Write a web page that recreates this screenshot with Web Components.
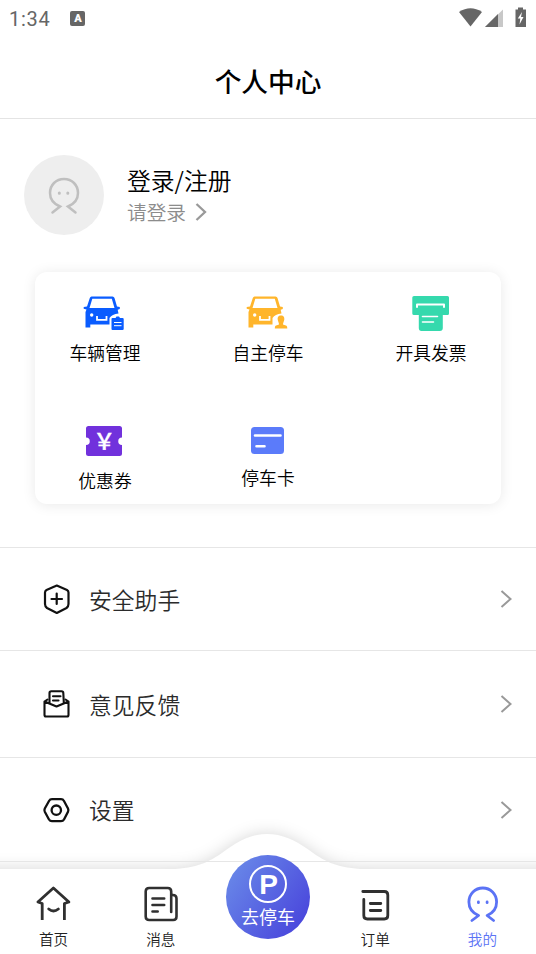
<!DOCTYPE html>
<html lang="zh-CN">
<head>
<meta charset="utf-8">
<title>个人中心</title>
<style>
html,body{margin:0;height:100%;background:#fff}
body{font-family:"Noto Sans CJK SC",sans-serif;font-weight:350;color:#111;overflow:hidden}
</style>
</head>
<body>
<profile-page></profile-page>
<script>
const define = (name, html) => {
  const t = document.createElement('template');
  t.innerHTML = html;
  customElements.define(name, class extends HTMLElement {
    constructor() {
      super();
      this.attachShadow({ mode: 'open' }).append(t.content.cloneNode(true));
    }
  });
};

define('status-bar', `
<style>
:host{display:flex;align-items:center;height:37px;box-sizing:border-box;padding:0 9px;color:#666;font:400 20px/37px Roboto,sans-serif}
.time{letter-spacing:.7px;padding-top:1px}
.kb{width:15px;height:15px;margin-left:20px;border-radius:2px;background:#666;color:#fff;font:900 11px/15px Roboto,sans-serif;text-align:center}
.right{margin-left:auto;display:block;margin-right:1px}
</style>
<span class="time">1:34</span><span class="kb">A</span>
<svg class="right" width="68" height="24" viewBox="458 6.500 68 24">
<path d="M459 11.500Q470.500 4 482 11.500L470.500 26Z" fill="#666"/>
<path d="M485 26.500 503 9V26.500Z" fill="#c8c8c8"/><path d="M485 26.500 498 13.500V26.500Z" fill="#666"/>
<path d="M515.500 9H518V7H523V9H526V26.500H515.500Z" fill="#666"/>
<path d="M522 11.500 517.800 18H520.300L519.500 24 523.500 16.500H521Z" fill="#fff"/>
</svg>`);

define('page-header', `
<style>:host{display:flex;justify-content:center;align-items:center;height:82px;box-sizing:border-box;border-bottom:1px solid #e4e4e4;font-size:26.700px;font-weight:500;color:#000;padding-top:6px}
</style><span><slot></slot></span>`);

define('user-profile', `
<style>
:host{display:flex;align-items:center;gap:23px;height:153px;box-sizing:border-box;padding:0 24px 1px}
.avatar{width:80px;height:80px;border-radius:50%;background:#eee;display:grid;place-items:center}
.name{font-size:23.800px;line-height:32px;color:#000;padding-top:2px}
.sub{display:flex;align-items:center;gap:9px;font-size:19.700px;line-height:32px;color:#8c8c8c}
</style>
<div class="avatar"><svg width="80" height="80" viewBox="24 155 80 80" fill="none" stroke="#bfbfbf" stroke-width="2.500" stroke-linecap="round">
<path d="M52.500 212.500 60 206.500C54 204 50 199 50 193C50 185 56 179 64 179S78 185 78 193C78 199 74 204 68 206.500L75.500 212.500"/>
<path d="M59.300 193v.300M67.800 193v.300" stroke-width="3"/></svg></div>
<div><div class="name"><slot></slot></div><div class="sub"><slot name="hint"></slot>
<svg width="13" height="20" viewBox="0 0 13 20" fill="none" stroke="#999" stroke-width="2.300"><path d="M1.500 2 10 10 1.500 18"/></svg></div></div>`);

define('service-item', `
<style>
:host{display:flex;flex-direction:column;align-items:center;font-size:17.800px;line-height:24px;color:#000}
::slotted(svg){display:block}
</style><slot name="icon"></slot><span><slot></slot></span>`);

define('service-card', `
<style>
:host{display:grid;grid-template-columns:repeat(3,140px);grid-template-rows:128px 104px;column-gap:23px;width:466px;height:232px;margin:0 auto;border-radius:12px;background:#fff;box-shadow:0 1px 14px rgba(0,0,0,.09)}
</style><slot></slot>`);

define('menu-row', `
<style>
:host{display:flex;align-items:center;height:var(--h,103px);box-sizing:border-box;border-bottom:1px solid #e6e6e6;padding:0 23px 0 40px;font-size:22.800px;color:#2b2b2b}
.label{margin-left:16px;flex:1;line-height:32px;padding-top:1px}
::slotted(svg){display:block}
</style>
<slot name="icon"></slot><span class="label"><slot></slot></span>
<svg width="13" height="20" viewBox="0 0 13 20" fill="none" stroke="#999" stroke-width="2"><path d="M1.500 2 10.500 10 1.500 18"/></svg>`);

define('tab-item', `
<style>
:host{display:flex;flex-direction:column;align-items:center;flex:1;padding-top:16px;font-size:14.600px;line-height:20px;color:#222}
:host([active]){color:#5b73f5}
::slotted(svg){display:block;margin-bottom:4px}
</style><slot name="icon"></slot><span><slot></slot></span>`);

define('park-button', `
<style>
:host{display:flex;flex-direction:column;align-items:center;width:84px;height:84px;box-sizing:border-box;padding-top:10px;border-radius:50%;background:linear-gradient(125deg,#6a8be9 5%,#4a47dc 88%);color:#fff;font-size:18px;font-weight:400;line-height:26px}
.p{width:38px;height:38px;box-sizing:border-box;border:2px solid #fff;border-radius:50%;font:bold 28px/35px "Liberation Sans",sans-serif;text-align:center;padding-left:1px}
.t{white-space:nowrap}
</style><div class="p">P</div><span class="t"><slot></slot></span>`);

define('tab-bar', `
<style>
:host{position:absolute;left:0;right:0;bottom:0;height:85px;display:flex}
.bg{position:absolute;left:0;bottom:0;overflow:hidden;z-index:-1}
::slotted(park-button){position:absolute;left:226px;top:-14px}
.gap{flex:1}
</style>
<svg class="bg" width="536" height="154" viewBox="0 800 536 154">
<path d="M-30 869H176C200 867 211 861 226 850C240 840 252 834 267 834S295 840 309 850C324 861 335 867 360 869H566V1000H-30Z" fill="#fff" style="filter:drop-shadow(0 0 8px rgba(0,0,0,.16))"/></svg>
<slot name="left"></slot><span class="gap"></span><slot name="right"></slot><slot></slot>`);

const car = `
<path fill-rule="evenodd" d="M91.500 296.500H112.500Q114 296.500 114.500 298L117 306.500 119.800 307V309L117.700 309.700 118.500 313.500Q112 314 109.500 318V324.500H90.300V327.500H85.500V312L86.500 309.500 83.700 308.700V307L87 306.500 89.800 298Q90.300 296.500 91.500 296.500ZM92.300 298.800 89.500 308H114.500L111.800 298.800Z"/>
<circle cx="91.700" cy="315" r="1.700" fill="#fff"/><path d="M97 316V319.800H106.500V316" fill="none" stroke="#fff" stroke-width="1.800"/>`;

define('profile-page', `
<style>
:host{display:flex;flex-direction:column;position:relative;width:536px;height:954px;overflow:hidden;background:#fff;isolation:isolate}
.menu{margin-top:43px;border-top:1px solid #e6e6e6}
</style>
<status-bar></status-bar>
<page-header>个人中心</page-header>
<user-profile>登录/注册<span slot="hint">请登录</span></user-profile>
<service-card>
<service-item><svg slot="icon" width="140" height="68" viewBox="35 272 140 68" fill="#0a5cff">${car}
<path d="M112.500 318H115.500L116.500 316.500H119L120 318H122.500Q123.700 318 123.700 319V329Q123.700 330 122.500 330H112.500Q111.500 330 111.500 329V319Q111.500 318 112.500 318Z"/><path d="M114 322.500H121.500M114 325.700H121.500" stroke="#fff" stroke-width="1"/></svg>车辆管理</service-item>
<service-item><svg slot="icon" width="140" height="68" viewBox="35 272 140 68" fill="#ffb52b">${car}
<path d="M118 315.500C120.800 315.500 121.500 317.500 121.300 319.500C121.100 321.500 120 322.500 120 324.500L123.500 325.800Q124.300 326.200 124.300 328.500H111.800Q111.800 326.200 112.500 325.800L116 324.500C116 322.500 114.900 321.500 114.700 319.500C114.500 317.500 115.200 315.500 118 315.500Z"/></svg>自主停车</service-item>
<service-item><svg slot="icon" width="140" height="68" viewBox="361 272 140 68" fill="#35d9ad">
<path d="M414 296H447.500Q449 296 449 297.500V313.500Q449 315 447.500 315H442.800V328Q442.800 331 439.800 331H421.500Q418.800 331 418.800 328V315H414Q412.300 315 412.300 313.500V297.500Q412.300 296 414 296Z"/>
<path d="M417 307V304.500H444V307" stroke="#fff" stroke-width="2" fill="none" stroke-linecap="round" stroke-linejoin="round"/><path d="M422.500 316.500H437.500M422.500 322H433.500" stroke="#fff" stroke-width="1.600" stroke-linecap="round"/></svg>开具发票</service-item>
<service-item><svg slot="icon" width="140" height="68" viewBox="35 400 140 68" fill="#7131dc">
<path d="M88.500 426H119.500Q122 426 122 428.500V437.500A3.700 3.700 0 0 0 122 445V453.500Q122 456 119.500 456H88.500Q86 456 86 453.500V445A3.700 3.700 0 0 0 86 437.500V428.500Q86 426 88.500 426Z"/>
<text x="104.200" y="449.300" text-anchor="middle" font-family="Noto Sans CJK SC" font-size="22" font-weight="500" fill="#fff" stroke="#fff" stroke-width=".4">￥</text></svg>优惠券</service-item>
<service-item><svg slot="icon" width="140" height="65" viewBox="198 400 140 65" fill="#5b7bfa">
<rect x="251" y="427" width="33" height="27" rx="3.500"/><path d="M255 435.500H280.500M256.500 446.300H264.500" stroke="#fff" stroke-width="2.600" stroke-linecap="round"/></svg>停车卡</service-item>
</service-card>
<div class="menu">
<menu-row style="--h:103px"><svg slot="icon" width="33" height="36" viewBox="40 581 33 36" fill="none" stroke="#111" stroke-width="2.200" stroke-linejoin="round" stroke-linecap="round"><path d="M56.800 585.500 67 590Q68.500 590.800 68.500 592.500V604Q68.500 606.500 66.500 608L56.800 613 47 608Q45 606.500 45 604V592.500Q45 590.800 46.500 590Z"/><path d="M51.500 599H62M56.700 593.500V604"/></svg>安全助手</menu-row>
<menu-row style="--h:107px"><svg slot="icon" width="33" height="36" viewBox="40 686.500 33 36" fill="none" stroke="#111" stroke-width="2.100" stroke-linejoin="round" stroke-linecap="round"><path d="M49.500 703V693.500Q49.500 691.700 51.300 691.700H61.500Q63.300 691.700 63.300 693.500L63.800 703"/><path d="M47.500 700 44.500 702V715.500Q44.500 717 46 717H67Q68.500 717 68.500 715.500V702L65.500 700M44.500 702 56.500 707 68.500 702M53 696.800H60.500M53 701H58.500"/></svg>意见反馈</menu-row>
<menu-row style="--h:104px"><svg slot="icon" width="33" height="36" viewBox="40 791.500 33 36" fill="none" stroke="#111" stroke-width="2.300" stroke-linejoin="round"><path d="M52 798.700H61Q63 798.700 64 800.500L68 808Q68.800 809.700 68 811.300L64 819Q63 820.700 61 820.700H52Q50 820.700 49 819L44.800 811.300Q44 809.700 44.800 808L49 800.500Q50 798.700 52 798.700Z"/><circle cx="56.300" cy="809.700" r="4.700"/></svg>设置</menu-row>
</div>
<tab-bar>
<tab-item slot="left"><svg slot="icon" width="40" height="40" viewBox="33.600 885 40 40" fill="none" stroke="#303030" stroke-width="2.800" stroke-linejoin="round"><path d="M41.800 920V903.500L37.500 902 53 888 68.500 902 64 903.500V920"/><path d="M48.300 909Q53 913 58 909" stroke-linecap="round"/></svg>首页</tab-item>
<tab-item slot="left"><svg slot="icon" width="40" height="40" viewBox="140.800 885 40 40" fill="none" stroke="#303030" stroke-width="2.600" stroke-linecap="round"><path d="M171 912V891.500Q171 888 167.500 888H149Q145.500 888 145.500 891.500V916.500Q145.500 920 149 920H173Q176.300 920 176.300 916.500V898.500Q176.300 895 172.500 895"/><path d="M152.300 898.500H164M152.300 905H164M152.300 911.500H157.500"/></svg>消息</tab-item>
<tab-item slot="right"><svg slot="icon" width="40" height="40" viewBox="355.200 885 40 40" fill="none" stroke="#303030" stroke-width="2.800" stroke-linecap="round"><path d="M363 891.500H384.500Q388 891.500 388 895V915.500Q388 919 384.500 919H367.500Q364 919 364 915.500V899.500M370.500 903.500H381M370.500 910.500H381"/></svg>订单</tab-item>
<tab-item slot="right" active><svg slot="icon" width="40" height="40" viewBox="462.400 885 40 40" fill="none" stroke="#5b73f5" stroke-width="2.800" stroke-linecap="round" stroke-linejoin="round"><path d="M472.300 920.500 479 915.500C473 913 469.300 908 469.300 902C469.300 894 475.500 888 483.200 888S497 894 497 902C497 908 493.500 913 487.500 915.500L494 920.500"/><path d="M478.800 902v.700M487.500 902v.700" stroke-width="2.800"/></svg>我的</tab-item>
<park-button>去停车</park-button>
</tab-bar>`);
</script>
</body>
</html>
